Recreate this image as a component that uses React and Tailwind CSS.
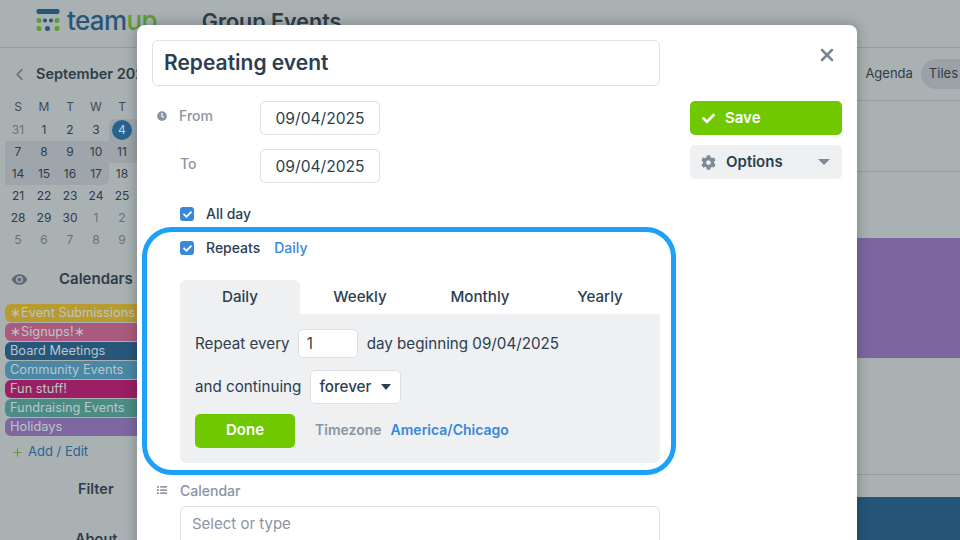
import React from 'react';
import { ChevronLeft, Plus, X } from 'lucide-react';
import { FaCheck, FaClock, FaCog, FaListUl } from 'react-icons/fa';
import { MdVisibility } from 'react-icons/md';

const weeks = [
  [31, 1, 2, 3, 4, 5, 6],
  [7, 8, 9, 10, 11, 12, 13],
  [14, 15, 16, 17, 18, 19, 20],
  [21, 22, 23, 24, 25, 26, 27],
  [28, 29, 30, 1, 2, 3, 4],
  [5, 6, 7, 8, 9, 10, 11],
];

const calendars = [
  { name: '∗Event Submissions∗', color: 'bg-[#b99b30]' },
  { name: '∗Signups!∗', color: 'bg-[#aa5a7e]' },
  { name: 'Board Meetings', color: 'bg-[#26577a]' },
  { name: 'Community Events', color: 'bg-[#4a88a6]' },
  { name: 'Fun stuff!', color: 'bg-[#9b1f63]' },
  { name: 'Fundraising Events', color: 'bg-[#4b8d85]' },
  { name: 'Holidays', color: 'bg-[#7d67a0]' },
];

const Logo = () => (
  <svg width="24" height="24" viewBox="0 0 24 24" className="shrink-0">
    <rect x="0.5" y="0" width="23" height="5" rx="2" fill="#26577a" />
    <circle cx="3" cy="11.5" r="2.5" fill="#5f9c30" />
    <circle cx="9" cy="11.5" r="2" fill="#26577a" />
    <circle cx="15" cy="11.5" r="2" fill="#26577a" />
    <circle cx="21" cy="11.5" r="2.5" fill="#5f9c30" />
    <circle cx="3" cy="19.5" r="2.5" fill="#5f9c30" />
    <circle cx="11.5" cy="19.5" r="2.5" fill="#26577a" />
    <circle cx="21" cy="19.5" r="2.5" fill="#5f9c30" />
  </svg>
);

const Checkbox = () => (
  <span className="w-[14px] h-[14px] rounded-[3px] bg-[#3b87d9] flex items-center justify-center text-white shrink-0">
    <FaCheck size={9} />
  </span>
);

const DateField = ({ value }) => (
  <div className="w-[120px] h-[34px] pt-px bg-white border border-[#dcdfe3] rounded-[5px] flex items-center justify-center text-[15.6px] text-[#2c3e50]">
    {value}
  </div>
);

const Sidebar = () => (
  <aside className="w-[200px] shrink-0 pl-[5px] text-[#2f3d49]">
    <div className="flex items-center h-[50px] pt-[2px]">
      <ChevronLeft size={19} strokeWidth={2} className="ml-[5px] text-[#5d6b78]" />
      <span className="ml-[7px] text-[14.5px] font-semibold whitespace-nowrap">September 2025</span>
    </div>
    <div className="grid grid-cols-[repeat(7,26px)] text-[12px] text-center">
      {['S', 'M', 'T', 'W', 'T', 'F', 'S'].map((d, i) => (
        <div key={i} className="h-[17px] mb-[4px] leading-[17px] text-[#3e4b56]">{d}</div>
      ))}
      {weeks.flat().map((d, i) => {
        const muted = i === 0 || i > 30;
        const selected = i >= 4 && i <= 17;
        return (
          <div
            key={i}
            className={`h-[22px] flex items-center justify-center ${muted ? 'text-[#67727c]' : ''} ${selected ? 'bg-[#9ea6ac]' : ''} ${i === 4 ? 'rounded-tl-md' : ''} ${i === 17 ? 'rounded-br-md' : ''}`}
          >
            {d === 4 && i === 4 ? (
              <span className="w-5 h-5 rounded-full bg-[#26648f] text-[#c9d3d8] flex items-center justify-center">4</span>
            ) : d}
          </div>
        );
      })}
    </div>
    <div className="flex items-center h-[20px] mt-[18px]">
      <MdVisibility size={17} className="ml-[6px] text-[#5d6b78]" />
      <span className="ml-[31px] text-[15px] font-semibold whitespace-nowrap">Calendars</span>
    </div>
    <div className="mt-[15px] w-[170px] flex flex-col gap-px">
      {calendars.map((c) => (
        <div key={c.name} className={`h-[18px] rounded-[6px] px-[5px] text-[12.8px] leading-[18px] text-[#bcc5c8] whitespace-nowrap overflow-hidden ${c.color}`}>
          {c.name}
        </div>
      ))}
    </div>
    <div className="flex items-center mt-[6px] h-[20px] ml-[6px] text-[13px] text-[#2a6492]">
      <Plus size={13} className="text-[#5f9c30]" />
      <span className="ml-[4px]">Add / Edit</span>
    </div>
    <div className="mt-[16px] ml-[73px] text-[14.5px] font-semibold">Filter</div>
    <div className="mt-[28px] ml-[70px] text-[14.5px] font-semibold">About</div>
  </aside>
);

const Main = () => (
  <main className="flex-1 flex flex-col">
    <div className="h-[53px] shrink-0 border-b border-[#959da0] flex items-center justify-end gap-2 text-[13px] text-[#2f3d49]">
      <span>Agenda</span>
      <span className="h-[30px] pl-2 pr-6 rounded-l-full bg-[#9aa2a8] flex items-center -mr-[22px]">Tiles</span>
    </div>
    <div className="h-[71px] shrink-0 border-b border-[#959da0]" />
    <div className="h-[66px] shrink-0" />
    <div className="h-[120px] shrink-0 bg-[#7d66a0]" />
    <div className="h-[117px] shrink-0 border-b border-[#959da0]" />
    <div className="h-[22px] shrink-0" />
    <div className="flex-1 bg-[#255678]" />
  </main>
);

const Modal = () => (
  <div className="absolute left-[137px] top-[25px] w-[720px] h-[600px] bg-white rounded-t-lg shadow-[0_0_14px_rgba(0,0,0,0.28)] flex gap-[30px] pl-[15px] pt-[15px] text-[#2c3e50]">
    <div className="w-[508px] shrink-0">
      <div className="h-[46px] pb-px border border-[#dcdfe3] rounded-md flex items-center px-[11px] text-[21px] font-semibold">
        Repeating event
      </div>
      <div className="mt-[15px] flex">
        <FaClock size={10} className="ml-[5px] mt-[10px] text-[#8a94a3] shrink-0" />
        <span className="ml-[12px] w-[81px] mt-[4px] text-[14px] font-medium text-[#8a94a3]">From</span>
        <DateField value="09/04/2025" />
      </div>
      <div className="mt-[14px] flex">
        <span className="ml-[28px] w-[80px] mt-[4px] text-[14px] font-medium text-[#8a94a3]">To</span>
        <DateField value="09/04/2025" />
      </div>
      <div className="mt-[24px] ml-[28px] flex items-center gap-[12px] h-[14px] text-[14px] font-medium">
        <Checkbox />
        <span className="pb-px">All day</span>
      </div>
      <div className="mt-[20px] ml-[28px] flex items-center gap-[12px] h-[14px] text-[14px] font-medium">
        <Checkbox />
        <span className="pb-px">Repeats</span>
        <span className="ml-[2px] pb-px text-[#3b87d9]">Daily</span>
      </div>
      <div className="mt-[25px] ml-[28px] w-[480px]">
        <div className="grid grid-cols-4 h-[34px] text-[15.2px] font-medium text-center">
          <div className="bg-[#eef0f2] rounded-t-md leading-[34px]">Daily</div>
          <div className="leading-[34px]">Weekly</div>
          <div className="leading-[34px]">Monthly</div>
          <div className="leading-[34px]">Yearly</div>
        </div>
        <div className="h-[149px] bg-[#eef0f2] rounded-b-md px-[15px] pt-[15px] text-[15.2px]">
          <div className="flex items-center h-[29px]">
            <span className="pt-px">Repeat every</span>
            <div className="ml-[8px] w-[60px] h-[29px] bg-white border border-[#dcdfe3] rounded-[5px] pl-2 leading-[28px]">1</div>
            <span className="ml-[9px] pt-px">day beginning 09/04/2025</span>
          </div>
          <div className="flex items-center h-[34px] mt-[12px]">
            <span>and continuing</span>
            <div className="ml-[9px] w-[91px] h-[34px] bg-white border border-[#dcdfe3] rounded-[5px] pl-2 flex items-center font-medium">
              forever
              <span className="ml-[10px] w-0 h-0 border-x-[5px] border-x-transparent border-t-[6px] border-t-[#2c3e50]" />
            </div>
          </div>
          <div className="flex items-center h-[34px] mt-[10px]">
            <div className="w-[100px] h-[34px] pb-px rounded-[5px] bg-[#70c900] text-white font-semibold flex items-center justify-center text-[15px]">Done</div>
            <span className="ml-[20px] pb-[3px] font-semibold text-[#8a94a3] text-[14px]">Timezone</span>
            <span className="ml-[9px] pb-[3px] font-semibold text-[#3b87d9] text-[14px]">America/Chicago</span>
          </div>
        </div>
      </div>
      <div className="mt-[19px] flex items-center h-[16px]">
        <FaListUl size={10} className="ml-[5px] text-[#6b7684]" />
        <span className="ml-[13px] text-[14px] font-medium text-[#8a94a3]">Calendar</span>
      </div>
      <div className="mt-[8px] ml-[28px] w-[480px] h-[46px] border border-[#dcdfe3] rounded-md px-[11px] pt-[6px] text-[15px] text-[#8a94a3]">
        Select or type
      </div>
    </div>
    <div className="w-[152px] shrink-0">
      <div className="h-[61px] flex justify-end pr-[5px] pt-[5px]">
        <X size={20} strokeWidth={3} className="text-[#7a8594]" />
      </div>
      <div className="h-[34px] rounded-[5px] bg-[#70c900] text-white text-[15px] font-semibold flex items-center pl-[12px]">
        <FaCheck size={13} />
        <span className="ml-[10px]">Save</span>
      </div>
      <div className="mt-[10px] h-[34px] rounded-[5px] bg-[#eef0f2] text-[15px] font-semibold flex items-center pl-[11px] pr-[12px]">
        <FaCog size={15} className="text-[#7f8a98]" />
        <span className="ml-[10px] flex-1">Options</span>
        <span className="w-0 h-0 border-x-[6px] border-x-transparent border-t-[6px] border-t-[#7f8a98]" />
      </div>
    </div>
    <div className="absolute left-[5px] top-[202px] w-[534px] h-[248px] border-[5px] border-[#1da1f8] rounded-[30px] pointer-events-none" />
  </div>
);

const App = () => (
  <div className="relative w-[960px] h-[540px] overflow-hidden bg-[#a9b1b3] font-['Inter',sans-serif]">
    <header className="h-[48px] border-b border-[#959da0] flex items-start pl-[36px] pt-[9px]">
      <Logo />
      <span className="ml-[7px] -mt-[8px] text-[26px] font-medium tracking-tight text-[#26577a]">team<span className="text-[#5f9c30]">up</span></span>
      <span className="ml-[45px] -mt-[4px] text-[21.5px] font-semibold text-[#2f3d49]">Group Events</span>
    </header>
    <div className="flex h-[492px] overflow-hidden">
      <Sidebar />
      <Main />
    </div>
    <Modal />
  </div>
);

export default App;
